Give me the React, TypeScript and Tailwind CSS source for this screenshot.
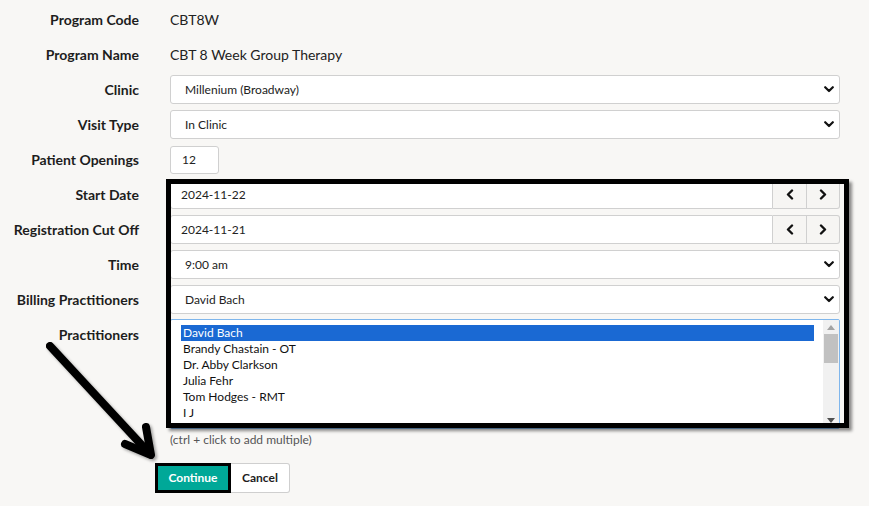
import React from "react";

const Chevron = () => (
  <svg width="10" height="7" viewBox="0 0 10 7" className="shrink-0">
    <path d="M1.2 1.2 L5 5 L8.8 1.2" fill="none" stroke="#111" strokeWidth="2.2" strokeLinecap="round" strokeLinejoin="round" />
  </svg>
);

const Arrow = ({ dir }: { dir: "l" | "r" }) => (
  <svg width="8" height="11" viewBox="0 0 8 11">
    {dir === "l" ? (
      <path d="M6 1.5 L2 5.5 L6 9.5" fill="none" stroke="#111" strokeWidth="2.4" strokeLinecap="round" strokeLinejoin="round" />
    ) : (
      <path d="M2 1.5 L6 5.5 L2 9.5" fill="none" stroke="#111" strokeWidth="2.4" strokeLinecap="round" strokeLinejoin="round" />
    )}
  </svg>
);

const Label = ({ children }: { children: React.ReactNode }) => (
  <div className="w-[140px] shrink-0 text-right font-bold text-[14px] text-[#1d1d1d] pr-[1px]">{children}</div>
);

const Select = ({ value }: { value: string }) => (
  <div className="w-[670px] h-[29px] bg-white border border-[#d0d0d0] rounded-[3px] flex items-center justify-between pl-[14px] pr-[5px] text-[12px] text-[#222]">
    <span>{value}</span>
    <Chevron />
  </div>
);

const DateInput = ({ value }: { value: string }) => (
  <div className="w-[670px] h-[29px] flex">
    <div className="flex-1 bg-white border border-[#d0d0d0] rounded-l-[3px] flex items-center pl-[10px] text-[12px] text-[#222]">{value}</div>
    <div className="w-[34px] bg-[#f6f5f3] border border-l-0 border-[#d0d0d0] flex items-center justify-center">
      <Arrow dir="l" />
    </div>
    <div className="w-[33px] bg-[#f6f5f3] border border-l-0 border-[#d0d0d0] rounded-r-[3px] flex items-center justify-center">
      <Arrow dir="r" />
    </div>
  </div>
);

const Row = ({ label, children }: { label: string; children: React.ReactNode }) => (
  <div className="h-[35px] flex items-center gap-[30px]">
    <Label>{label}</Label>
    {children}
  </div>
);

const practitioners = [
  "David Bach",
  "Brandy Chastain - OT",
  "Dr. Abby Clarkson",
  "Julia Fehr",
  "Tom Hodges - RMT",
  "I J",
  "Jackie Kennedy - RT, RC, OT",
];

export default function App() {
  return (
    <div
      className="relative w-[869px] h-[506px] bg-[#f8f7f5] overflow-hidden text-[#222]"
      style={{ fontFamily: "Lato, 'Open Sans', sans-serif" }}
    >
      <div className="pt-[2px] flex flex-col">
        <Row label="Program Code">
          <span className="text-[14px]">CBT8W</span>
        </Row>
        <Row label="Program Name">
          <span className="text-[14px]">CBT 8 Week Group Therapy</span>
        </Row>
        <Row label="Clinic">
          <Select value="Millenium (Broadway)" />
        </Row>
        <Row label="Visit Type">
          <Select value="In Clinic" />
        </Row>
        <Row label="Patient Openings">
          <div className="w-[49px] h-[28px] bg-white border border-[#d0d0d0] rounded-[3px] flex items-center pl-[11px] text-[12px]">12</div>
        </Row>
        <Row label="Start Date">
          <DateInput value="2024-11-22" />
        </Row>
        <Row label="Registration Cut Off">
          <DateInput value="2024-11-21" />
        </Row>
        <Row label="Time">
          <Select value="9:00 am" />
        </Row>
        <Row label="Billing Practitioners">
          <Select value="David Bach" />
        </Row>
        <div className="flex gap-[30px] pt-[2px]">
          <div className="pt-[5px]">
            <Label>Practitioners</Label>
          </div>
          <div className="flex flex-col">
            <div className="w-[670px] h-[110px] bg-white border border-[#7fb6ec] rounded-[2px] flex overflow-hidden">
              <div className="flex-1 h-full overflow-hidden pl-[10px] pr-[9px] pt-[5px] text-[12px] leading-[16px]">
                {practitioners.map((p, i) => (
                  <div key={p} className={i === 0 ? "bg-[#1a69d3] text-white pl-[2px]" : "pl-[2px] text-[#111]"}>
                    {p}
                  </div>
                ))}
              </div>
              <div className="w-[16px] bg-[#f1f1f1] flex flex-col items-center justify-between py-[5px]">
                <svg width="8" height="5" viewBox="0 0 8 5"><path d="M0 5 L4 0 L8 5 Z" fill="#a3a3a3" /></svg>
                <div className="w-[14px] h-[29px] bg-[#c1c1c1] mt-[4px] mb-auto" />
                <svg width="8" height="5" viewBox="0 0 8 5"><path d="M0 0 L4 5 L8 0 Z" fill="#505050" /></svg>
              </div>
            </div>
            <div className="text-[12px] text-[#555] mt-[2px]">(ctrl + click to add multiple)</div>
          </div>
        </div>
        <div className="flex pl-[155px] mt-[14px]">
          <div className="h-[30px] bg-[#00a898] border-[3px] border-black flex items-center text-white font-bold text-[12px] w-[76px] justify-center">
            Continue
          </div>
          <div className="h-[30px] w-[59px] bg-white border border-[#cfcfcf] border-l-0 rounded-r-[3px] flex items-center justify-center font-bold text-[12px] text-[#1d1d1d]">
            Cancel
          </div>
        </div>
      </div>

      {/* annotation box */}
      <div className="absolute left-[166px] top-[179px] w-[683px] h-[249px] border-[5px] border-black shadow-[3px_3px_3px_rgba(0,0,0,0.45)] pointer-events-none" />

      {/* annotation arrow */}
      <svg className="absolute left-0 top-0 pointer-events-none" width="869" height="506">
        <g stroke="#000" strokeWidth="8" strokeLinecap="round" strokeLinejoin="round" fill="none" style={{ filter: "drop-shadow(2px 2px 1.5px rgba(0,0,0,0.35))" }}>
          <path d="M50 346 L150 454" />
          <path d="M125 444 L151 455 L146 427" />
        </g>
      </svg>
    </div>
  );
}
